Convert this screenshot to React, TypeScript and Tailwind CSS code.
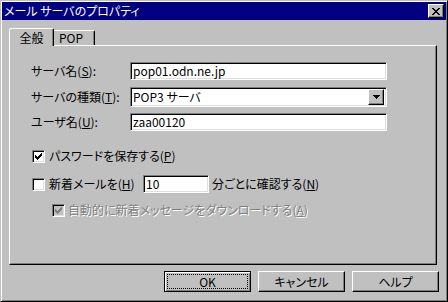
const sunken =
  "border border-t-[#808080] border-l-[#808080] border-b-white border-r-white shadow-[inset_1px_1px_0_#000000,inset_-1px_-1px_0_#dfdfdf]";
const raised =
  "border border-t-white border-l-white border-b-black border-r-black shadow-[inset_-1px_-1px_0_#808080]";

const CheckMark = ({ color }: { color: string }) => (
  <svg width="7" height="7" viewBox="0 0 7 7" shapeRendering="crispEdges">
    <path
      d="M0 2h1v3H0zM1 3h1v3H1zM2 4h1v3H2zM3 3h1v3H3zM4 2h1v3H4zM5 1h1v3H5zM6 0h1v3H6z"
      fill={color}
    />
  </svg>
);

const CheckBox = ({ checked, disabled }: { checked?: boolean; disabled?: boolean }) => (
  <div
    className={`flex h-[13px] w-[13px] shrink-0 items-center justify-center ${sunken} ${
      disabled ? "bg-[#c0c0c0]" : "bg-white"
    }`}
  >
    {checked && <CheckMark color={disabled ? "#808080" : "#000000"} />}
  </div>
);

const Key = ({ k }: { k: string }) => (
  <>
    (<span className="underline underline-offset-[1px]">{k}</span>)
  </>
);

const FieldRow = ({ label, k, value, mt }: { label: string; k: string; value: string; mt: string }) => (
  <div className={`flex items-center ${mt}`}>
    <div className="w-[99px] shrink-0">
      {label}
      <Key k={k} />:
    </div>
    <div className={`flex h-[18px] w-[257px] items-center bg-white pl-[2px] ${sunken}`}>{value}</div>
  </div>
);

const Button = ({ children, primary }: { children: React.ReactNode; primary?: boolean }) =>
  primary ? (
    <div className="flex h-[21px] w-[87px] border border-black p-[2px] shadow-[inset_1px_1px_0_#ffffff,inset_-1px_-1px_0_#808080]">
      <div className="flex flex-1 items-center justify-center border border-dotted border-black">{children}</div>
    </div>
  ) : (
    <div className={`flex h-[21px] w-[87px] items-center justify-center ${raised}`}>{children}</div>
  );

export default function App() {
  return (
    <div className="h-[302px] w-[448px] bg-[#c0c0c0] font-['Noto_Sans_CJK_JP',sans-serif] text-[12px] leading-[14px] text-black [font-feature-settings:'palt']">
      <div className="flex h-full w-full flex-col border border-t-[#c0c0c0] border-l-[#c0c0c0] border-b-black border-r-black p-px shadow-[inset_1px_1px_0_#ffffff,inset_-1px_-1px_0_#808080]">
        {/* Title bar */}
        <div className="flex h-[18px] shrink-0 items-center justify-between bg-[#000080] pl-[2px] pr-[2px]">
          <span className="text-white">メール サーバのプロパティ</span>
          <div className={`flex h-[14px] w-[16px] items-center justify-center bg-[#c0c0c0] ${raised}`}>
            <svg width="8" height="7" viewBox="0 0 8 7" shapeRendering="crispEdges">
              <path d="M0 0h2v1H0zM6 0h2v1H6zM1 1h2v1H1zM5 1h2v1H5zM2 2h4v1H2zM3 3h2v1H3zM2 4h4v1H2zM1 5h2v1H1zM5 5h2v1H5zM0 6h2v1H0zM6 6h2v1H6z" />
            </svg>
          </div>
        </div>

        <div className="flex flex-col px-[7px] pt-[8px]">
          {/* Tabs */}
          <div className="relative z-10 -mb-px flex items-end">
            <div className="flex h-[18px] w-[45px] items-center justify-center rounded-tl-[2px] rounded-tr-[2px] border-l border-t border-r border-l-white border-t-white border-r-black bg-[#c0c0c0] shadow-[inset_-1px_0_0_#808080]">
              全般
            </div>
            <div className="mb-px flex h-[15px] w-[41px] items-center rounded-tr-[2px] border-t border-r border-t-white border-r-black bg-[#c0c0c0] pl-[5px] shadow-[inset_-1px_0_0_#808080]">
              POP
            </div>
          </div>

          {/* Panel */}
          <div className={`flex h-[220px] w-[428px] flex-col pl-[21px] pt-[16px] ${raised}`}>
            <FieldRow label="サーバ名" k="S" value="pop01.odn.ne.jp" mt="" />

            <div className="mt-[7px] flex items-center">
              <div className="w-[99px] shrink-0">
                サーバの種類
                <Key k="T" />:
              </div>
              <div className={`flex h-[20px] w-[257px] items-center justify-between bg-white pl-[2px] pr-[2px] ${sunken}`}>
                <span>POP3 サーバ</span>
                <div className={`flex h-[16px] w-[16px] items-center justify-center bg-[#c0c0c0] ${raised}`}>
                  <svg width="7" height="4" viewBox="0 0 7 4" shapeRendering="crispEdges">
                    <path d="M0 0h7v1H0zM1 1h5v1H1zM2 2h3v1H2zM3 3h1v1H3z" />
                  </svg>
                </div>
              </div>
            </div>

            <FieldRow label="ユーザ名" k="U" value="zaa00120" mt="mt-[6px]" />

            {/* Save password */}
            <div className="mt-[18px] flex h-[14px] items-center gap-[4px] pl-px">
              <CheckBox checked />
              <span>
                パスワードを保存する
                <Key k="P" />
              </span>
            </div>

            {/* New mail check */}
            <div className="mt-[12px] flex items-center pl-px">
              <CheckBox />
              <span className="ml-[4px] w-[94px]">
                新着メールを
                <Key k="H" />
              </span>
              <div className={`flex h-[18px] w-[66px] items-center bg-white pl-[2px] ${sunken}`}>10</div>
              <span className="ml-[3px]">
                分ごとに確認する
                <Key k="N" />
              </span>
            </div>

            {/* Auto download (disabled) */}
            <div className="mt-[10px] flex h-[14px] items-center gap-[3px] pl-[21px]">
              <CheckBox checked disabled />
              <span className="text-[#808080] [text-shadow:1px_1px_0_#ffffff]">
                自動的に新着メッセージをダウンロードする
                <Key k="A" />
              </span>
            </div>
          </div>

          {/* Buttons */}
          <div className="mt-[6px] flex justify-end gap-[7px]">
            <Button primary>OK</Button>
            <Button>キャンセル</Button>
            <Button>ヘルプ</Button>
          </div>
        </div>
      </div>
    </div>
  );
}
